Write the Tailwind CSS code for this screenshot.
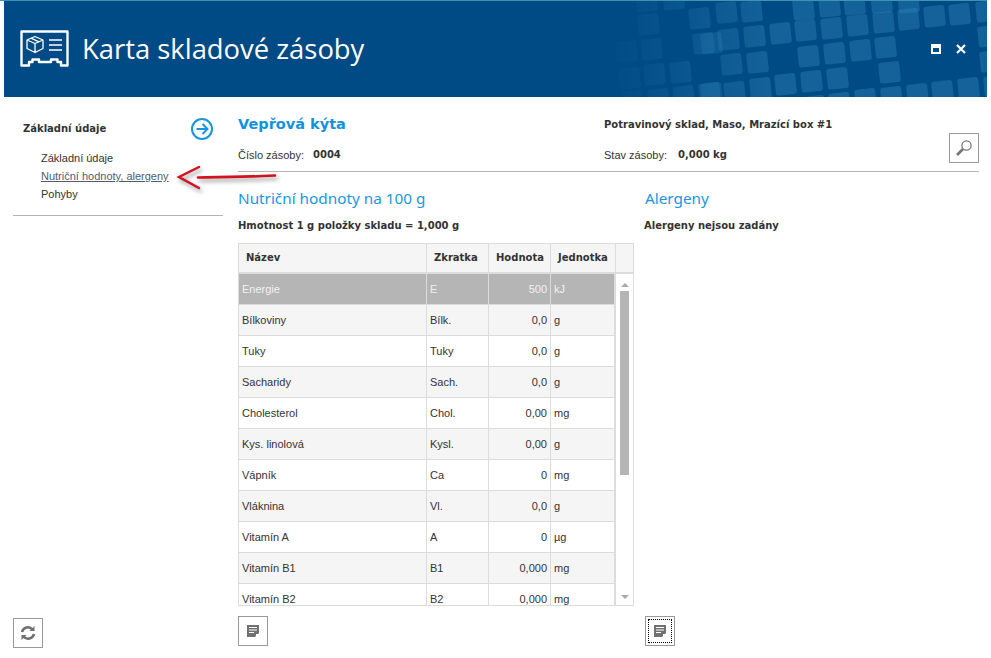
<!DOCTYPE html>
<html lang="cs">
<head>
  <meta charset="UTF-8">
  <title>Karta skladové zásoby</title>
  <script src="https://cdn.jsdelivr.net/npm/@tailwindcss/browser@4"></script>
</head>
<body class="bg-white">
<div class="relative w-[991px] h-[658px] overflow-hidden bg-white text-[#333] text-[11px] font-['Liberation_Sans',sans-serif]">

  <div class="w-[987px] h-px bg-[#3a96ae]"></div>

  <!-- Hlavicka -->
  <header class="relative ml-[4px] w-[983px] h-[96px] bg-[#004a85] flex items-center overflow-hidden">
    <svg class="absolute inset-0" width="983" height="96" viewBox="4 1 983 96">
      <defs>
        <linearGradient id="fade" gradientUnits="userSpaceOnUse" x1="600" y1="0" x2="770" y2="0">
          <stop offset="0" stop-color="#2d7fb5" stop-opacity="0"/>
          <stop offset="1" stop-color="#2d7fb5" stop-opacity="0.45"/>
        </linearGradient>
      </defs>
      <g fill="url(#fade)">
        <rect x="715" y="3" width="21" height="21" rx="3" transform="rotate(-6 715 3)"/>
        <rect x="740" y="2" width="21" height="21" rx="3" transform="rotate(-6 740 2)"/>
        <rect x="792" y="0" width="21" height="21" rx="3" transform="rotate(-6 792 0)"/>
        <rect x="818" y="-3" width="21" height="21" rx="3" transform="rotate(-6 818 -3)"/>
        <rect x="843" y="-5" width="21" height="21" rx="3" transform="rotate(-6 843 -5)"/>
        <rect x="870" y="-7" width="21" height="21" rx="3" transform="rotate(-6 870 -7)"/>
        <rect x="897" y="-7" width="21" height="21" rx="3" transform="rotate(-6 897 -7)"/>
        <rect x="717" y="30" width="21" height="21" rx="3" transform="rotate(-6 717 30)"/>
        <rect x="743" y="27" width="21" height="21" rx="3" transform="rotate(-6 743 27)"/>
        <rect x="769" y="24" width="21" height="21" rx="3" transform="rotate(-6 769 24)"/>
        <rect x="794" y="21" width="21" height="21" rx="3" transform="rotate(-6 794 21)"/>
        <rect x="820" y="19" width="21" height="21" rx="3" transform="rotate(-6 820 19)"/>
        <rect x="846" y="16" width="21" height="21" rx="3" transform="rotate(-6 846 16)"/>
        <rect x="872" y="13" width="21" height="21" rx="3" transform="rotate(-6 872 13)"/>
        <rect x="897" y="10" width="21" height="21" rx="3" transform="rotate(-6 897 10)"/>
        <rect x="923" y="7" width="21" height="21" rx="3" transform="rotate(-6 923 7)"/>
        <rect x="948" y="5" width="21" height="21" rx="3" transform="rotate(-6 948 5)"/>
        <rect x="975" y="2" width="21" height="21" rx="3" transform="rotate(-6 975 2)"/>
        <rect x="700" y="34" width="21" height="21" rx="3" transform="rotate(-6 700 34)"/>
        <rect x="720" y="55" width="21" height="21" rx="3" transform="rotate(-6 720 55)"/>
        <rect x="746" y="53" width="21" height="21" rx="3" transform="rotate(-6 746 53)"/>
        <rect x="797" y="47" width="21" height="21" rx="3" transform="rotate(-6 797 47)"/>
        <rect x="823" y="44" width="21" height="21" rx="3" transform="rotate(-6 823 44)"/>
        <rect x="849" y="41" width="21" height="21" rx="3" transform="rotate(-6 849 41)"/>
        <rect x="874" y="38" width="21" height="21" rx="3" transform="rotate(-6 874 38)"/>
        <rect x="977" y="27" width="21" height="21" rx="3" transform="rotate(-6 977 27)"/>
        <rect x="979" y="52" width="21" height="21" rx="3" transform="rotate(-6 979 52)"/>
        <rect x="878" y="63" width="21" height="21" rx="3" transform="rotate(-6 878 63)"/>
        <rect x="723" y="83" width="21" height="21" rx="3" transform="rotate(-6 723 83)"/>
        <rect x="749" y="79" width="21" height="21" rx="3" transform="rotate(-6 749 79)"/>
        <rect x="774" y="75" width="21" height="21" rx="3" transform="rotate(-6 774 75)"/>
        <rect x="800" y="72" width="21" height="21" rx="3" transform="rotate(-6 800 72)"/>
        <rect x="826" y="69" width="21" height="21" rx="3" transform="rotate(-6 826 69)"/>
        <rect x="700" y="84" width="21" height="21" rx="3" transform="rotate(-6 700 84)"/>
        <rect x="803" y="97" width="21" height="21" rx="3" transform="rotate(-6 803 97)"/>
        <rect x="828" y="94" width="21" height="21" rx="3" transform="rotate(-6 828 94)"/>
        <rect x="854" y="90" width="21" height="21" rx="3" transform="rotate(-6 854 90)"/>
        <rect x="880" y="88" width="21" height="21" rx="3" transform="rotate(-6 880 88)"/>
        <rect x="906" y="85" width="21" height="21" rx="3" transform="rotate(-6 906 85)"/>
        <rect x="931" y="82" width="21" height="21" rx="3" transform="rotate(-6 931 82)"/>
        <rect x="957" y="79" width="21" height="21" rx="3" transform="rotate(-6 957 79)"/>
        <rect x="983" y="77" width="21" height="21" rx="3" transform="rotate(-6 983 77)"/>
        <rect x="637" y="15" width="21" height="21" rx="3" transform="rotate(-6 637 15)"/>
        <rect x="640" y="40" width="21" height="21" rx="3" transform="rotate(-6 640 40)"/>
        <rect x="643" y="65" width="21" height="21" rx="3" transform="rotate(-6 643 65)"/>
        <rect x="669" y="63" width="21" height="21" rx="3" transform="rotate(-6 669 63)"/>
        <rect x="647" y="90" width="21" height="21" rx="3" transform="rotate(-6 647 90)"/>
        <rect x="672" y="87" width="21" height="21" rx="3" transform="rotate(-6 672 87)"/>
        <rect x="698" y="84" width="21" height="21" rx="3" transform="rotate(-6 698 84)"/>
        <rect x="688" y="9" width="21" height="21" rx="3" transform="rotate(-6 688 9)"/>
        <rect x="692" y="34" width="21" height="21" rx="3" transform="rotate(-6 692 34)"/>
        <rect x="635" y="-8" width="21" height="21" rx="3" transform="rotate(-6 635 -8)"/>
        <rect x="662" y="-10" width="21" height="21" rx="3" transform="rotate(-6 662 -10)"/>
        <rect x="615" y="42" width="21" height="21" rx="3" transform="rotate(-6 615 42)"/>
        <rect x="618" y="69" width="21" height="21" rx="3" transform="rotate(-6 618 69)"/>
        <rect x="620" y="92" width="21" height="21" rx="3" transform="rotate(-6 620 92)"/>
      </g>
    </svg>

    <svg class="relative ml-[16px] shrink-0" width="50" height="38" viewBox="0 0 50 38" fill="none" stroke="#fff">
      <path d="M1.5 1.5H47.500V35.500H41V32H37.500V29.500H31V32H19V29.500H12.500V32H9V35.500H1.500Z" stroke-width="2.400" stroke-linejoin="round"/>
      <path d="M15 6.500L23 10V18.500L15 22.500L7 18.500V10ZM7 10L15 13.500L23 10M15 13.500V22.500M11 8.200L19 11.800" stroke-width="1.300" stroke-linejoin="round"/>
      <path d="M29 10H42M29 15H42M29 20H42" stroke-width="1.600"/>
    </svg>
    <h1 class="relative ml-[12px] text-[27.4px] leading-none text-white font-['Open_Sans',sans-serif]">Karta skladové zásoby</h1>

    <div class="relative ml-auto mr-[21px] flex items-center gap-[15px]">
      <svg width="10" height="10" viewBox="0 0 10 10"><path d="M0 0H10V10H0Z M2 4V8H8V4Z" fill="#fff" fill-rule="evenodd"/></svg>
      <svg width="10" height="10" viewBox="0 0 10 10"><path d="M1 1L9 9M9 1L1 9" stroke="#fff" stroke-width="2.200"/></svg>
    </div>
  </header>

  <div class="flex h-[561px]">
    <!-- Levy panel -->
    <aside class="ml-[13px] w-[210px] shrink-0 flex flex-col">
      <div class="pt-[20px] pl-[10px] pr-[10px] h-[50px] flex justify-between items-start">
        <h2 class="mt-[4px] font-['DejaVu_Sans',sans-serif] font-bold text-[10px] leading-[16px] text-[#333]">Základní údaje</h2>
        <svg width="24" height="24" viewBox="0 0 24 24" fill="none" stroke="#1695e0" stroke-width="2" class="mr-[-1px]"><circle cx="12" cy="12" r="10"/><path d="M6.500 12H17M12.500 7L17.500 12L12.500 17"/></svg>
      </div>
      <nav class="pl-[28px] flex flex-col text-[11px] leading-[18px] mt-[2px]">
        <a>Základní údaje</a>
        <a class="underline text-[#555a70]">Nutriční hodnoty, alergeny</a>
        <a>Pohyby</a>
      </nav>
      <div class="mt-[12px] border-t border-[#b5b5b5]"></div>
      <button class="mt-auto mb-[10px] w-[30px] h-[30px] border border-[#999] flex items-center justify-center">
        <svg width="18" height="18" viewBox="0 0 18 18" fill="none" stroke="#707070" stroke-width="2.600"><path d="M3 8A6 6 0 0 1 13.500 5.500M15 10A6 6 0 0 1 4.500 12.500"/><path d="M15.500 2V7H10.500ZM2.500 16V11H7.500Z" fill="#707070" stroke="none"/></svg>
      </button>
    </aside>

    <!-- Obsah -->
    <main class="ml-[15px] w-[741px] flex flex-col">
      <section class="h-[75px] border-b border-[#b5b5b5] relative flex">
        <div class="w-[366px]">
          <h2 class="mt-[16px] font-['DejaVu_Sans',sans-serif] font-bold text-[14.500px] leading-[22px] text-[#1192e0]">Vepřová kýta</h2>
          <p class="mt-[11px] flex leading-[18px]">
            <span class="w-[75px]">Číslo zásoby:</span>
            <b class="font-['DejaVu_Sans',sans-serif] text-[10px]">0004</b>
          </p>
        </div>
        <div>
          <p class="mt-[20px] font-['DejaVu_Sans',sans-serif] font-bold text-[10px] leading-[16px]">Potravinový sklad, Maso, Mrazící box #1</p>
          <p class="mt-[13px] flex leading-[18px]">
            <span class="w-[74px]">Stav zásoby:</span>
            <b class="font-['DejaVu_Sans',sans-serif] text-[10px]">0,000 kg</b>
          </p>
        </div>
        <button class="ml-auto mt-[36px] w-[30px] h-[30px] border border-[#999] flex items-center justify-center">
          <svg width="18" height="18" viewBox="0 0 18 18" fill="none"><circle cx="11.500" cy="6.500" r="4.600" stroke="#777" stroke-width="1.300"/><path d="M8 10L2 16" stroke="#777" stroke-width="2.600"/></svg>
        </button>
      </section>

      <div class="flex">
        <section class="w-[396px]">
          <h3 class="mt-[14px] text-[#1a96e6] text-[15.300px] leading-[24px] font-['Noto_Sans',sans-serif]">Nutriční hodnoty na 100 g</h3>
          <p class="mt-[8px] font-['DejaVu_Sans',sans-serif] font-bold text-[10px] leading-[16px]">Hmotnost 1 g položky skladu = 1,000 g</p>
          <div class="mt-[9px] w-[396px] h-[363px] border border-[#dcdcdc] overflow-hidden">
            <div class="flex h-[30px] bg-[#f5f5f5] border-b-2 border-[#dcdcdc] font-['DejaVu_Sans',sans-serif] font-bold text-[10px] leading-[28px]">
              <div class="w-[188px] pl-[7px] border-r border-[#dcdcdc]">Název</div>
              <div class="w-[62px] pl-[7px] border-r border-[#dcdcdc]">Zkratka</div>
              <div class="w-[62px] pl-[7px] border-r border-[#dcdcdc]">Hodnota</div>
              <div class="w-[65px] pl-[7px] border-r border-[#dcdcdc]">Jednotka</div>
            </div>
            <div class="flex">
              <div class="w-[377px] border-r-2 border-[#dcdcdc] shrink-0">
                <div class="flex h-[31px] items-center bg-[#b5b5b5] text-[#f2f2f2] border-b border-[#dcdcdc]">
                  <div class="w-[188px] pl-[3px] h-full leading-[30px] border-r border-[#dcdcdc]">Energie</div>
                  <div class="w-[62px] pl-[3px] h-full leading-[30px] border-r border-[#dcdcdc]">E</div>
                  <div class="w-[62px] pr-[3px] h-full leading-[30px] text-right border-r border-[#dcdcdc]">500</div>
                  <div class="pl-[3px] leading-[30px]">kJ</div>
                </div>
                <div class="flex h-[31px] bg-[#f5f5f5] border-b border-[#dcdcdc]">
                  <div class="w-[188px] pl-[3px] leading-[30px] border-r border-[#dcdcdc]">Bílkoviny</div>
                  <div class="w-[62px] pl-[3px] leading-[30px] border-r border-[#dcdcdc]">Bílk.</div>
                  <div class="w-[62px] pr-[3px] leading-[30px] text-right border-r border-[#dcdcdc]">0,0</div>
                  <div class="pl-[3px] leading-[30px]">g</div>
                </div>
                <div class="flex h-[31px] bg-white border-b border-[#dcdcdc]">
                  <div class="w-[188px] pl-[3px] leading-[30px] border-r border-[#dcdcdc]">Tuky</div>
                  <div class="w-[62px] pl-[3px] leading-[30px] border-r border-[#dcdcdc]">Tuky</div>
                  <div class="w-[62px] pr-[3px] leading-[30px] text-right border-r border-[#dcdcdc]">0,0</div>
                  <div class="pl-[3px] leading-[30px]">g</div>
                </div>
                <div class="flex h-[31px] bg-[#f5f5f5] border-b border-[#dcdcdc]">
                  <div class="w-[188px] pl-[3px] leading-[30px] border-r border-[#dcdcdc]">Sacharidy</div>
                  <div class="w-[62px] pl-[3px] leading-[30px] border-r border-[#dcdcdc]">Sach.</div>
                  <div class="w-[62px] pr-[3px] leading-[30px] text-right border-r border-[#dcdcdc]">0,0</div>
                  <div class="pl-[3px] leading-[30px]">g</div>
                </div>
                <div class="flex h-[31px] bg-white border-b border-[#dcdcdc]">
                  <div class="w-[188px] pl-[3px] leading-[30px] border-r border-[#dcdcdc]">Cholesterol</div>
                  <div class="w-[62px] pl-[3px] leading-[30px] border-r border-[#dcdcdc]">Chol.</div>
                  <div class="w-[62px] pr-[3px] leading-[30px] text-right border-r border-[#dcdcdc]">0,00</div>
                  <div class="pl-[3px] leading-[30px]">mg</div>
                </div>
                <div class="flex h-[31px] bg-[#f5f5f5] border-b border-[#dcdcdc]">
                  <div class="w-[188px] pl-[3px] leading-[30px] border-r border-[#dcdcdc]">Kys. linolová</div>
                  <div class="w-[62px] pl-[3px] leading-[30px] border-r border-[#dcdcdc]">Kysl.</div>
                  <div class="w-[62px] pr-[3px] leading-[30px] text-right border-r border-[#dcdcdc]">0,00</div>
                  <div class="pl-[3px] leading-[30px]">g</div>
                </div>
                <div class="flex h-[31px] bg-white border-b border-[#dcdcdc]">
                  <div class="w-[188px] pl-[3px] leading-[30px] border-r border-[#dcdcdc]">Vápník</div>
                  <div class="w-[62px] pl-[3px] leading-[30px] border-r border-[#dcdcdc]">Ca</div>
                  <div class="w-[62px] pr-[3px] leading-[30px] text-right border-r border-[#dcdcdc]">0</div>
                  <div class="pl-[3px] leading-[30px]">mg</div>
                </div>
                <div class="flex h-[31px] bg-[#f5f5f5] border-b border-[#dcdcdc]">
                  <div class="w-[188px] pl-[3px] leading-[30px] border-r border-[#dcdcdc]">Vláknina</div>
                  <div class="w-[62px] pl-[3px] leading-[30px] border-r border-[#dcdcdc]">Vl.</div>
                  <div class="w-[62px] pr-[3px] leading-[30px] text-right border-r border-[#dcdcdc]">0,0</div>
                  <div class="pl-[3px] leading-[30px]">g</div>
                </div>
                <div class="flex h-[31px] bg-white border-b border-[#dcdcdc]">
                  <div class="w-[188px] pl-[3px] leading-[30px] border-r border-[#dcdcdc]">Vitamín A</div>
                  <div class="w-[62px] pl-[3px] leading-[30px] border-r border-[#dcdcdc]">A</div>
                  <div class="w-[62px] pr-[3px] leading-[30px] text-right border-r border-[#dcdcdc]">0</div>
                  <div class="pl-[3px] leading-[30px]">µg</div>
                </div>
                <div class="flex h-[31px] bg-[#f5f5f5] border-b border-[#dcdcdc]">
                  <div class="w-[188px] pl-[3px] leading-[30px] border-r border-[#dcdcdc]">Vitamín B1</div>
                  <div class="w-[62px] pl-[3px] leading-[30px] border-r border-[#dcdcdc]">B1</div>
                  <div class="w-[62px] pr-[3px] leading-[30px] text-right border-r border-[#dcdcdc]">0,000</div>
                  <div class="pl-[3px] leading-[30px]">mg</div>
                </div>
                <div class="flex h-[22px] bg-white overflow-hidden">
                  <div class="w-[188px] pl-[3px] leading-[30px] border-r border-[#dcdcdc]">Vitamín B2</div>
                  <div class="w-[62px] pl-[3px] leading-[30px] border-r border-[#dcdcdc]">B2</div>
                  <div class="w-[62px] pr-[3px] leading-[30px] text-right border-r border-[#dcdcdc]">0,000</div>
                  <div class="pl-[3px] leading-[30px]">mg</div>
                </div>
              </div>
              <!-- Posuvnik -->
              <div class="w-[17px] h-[332px] flex flex-col items-center">
                <div class="mt-[9px] w-0 h-0 border-x-[4px] border-x-transparent border-b-[4px] border-b-[#aaa]"></div>
                <div class="mt-[4px] w-[9px] h-[184px] bg-[#b5b5b5]"></div>
                <div class="mt-auto mb-[7px] w-0 h-0 border-x-[4px] border-x-transparent border-t-[4px] border-t-[#aaa]"></div>
              </div>
            </div>
          </div>
          <button class="mt-[10px] w-[30px] h-[30px] border border-[#999] flex items-center justify-center">
            <svg width="14" height="14" viewBox="0 0 14 14"><path d="M1 1H13V9L9 13H1Z" fill="#707070"/><path d="M3 3.500H11M3 6H11M3 8.500H8" stroke="#fff" stroke-width="1"/><path d="M10 13V10H13Z" fill="#fff"/></svg>
          </button>
        </section>

        <section class="ml-[10px] w-[335px] flex flex-col">
          <h3 class="mt-[14px] ml-[1px] text-[#1a96e6] text-[15.300px] leading-[24px] font-['Noto_Sans',sans-serif]">Alergeny</h3>
          <p class="mt-[8px] font-['DejaVu_Sans',sans-serif] font-bold text-[10px] leading-[16px]">Alergeny nejsou zadány</p>
          <button class="mt-[382px] ml-[1px] w-[30px] h-[30px] border border-[#999] p-[2px]">
            <span class="w-full h-full border border-dotted border-black flex items-center justify-center">
              <svg width="14" height="14" viewBox="0 0 14 14"><path d="M1 1H13V9L9 13H1Z" fill="#707070"/><path d="M3 3.500H11M3 6H11M3 8.500H8" stroke="#fff" stroke-width="1"/><path d="M10 13V10H13Z" fill="#fff"/></svg>
            </span>
          </button>
        </section>
      </div>
    </main>
  </div>

  <!-- Sipka pres obsah -->
  <svg class="absolute left-[170px] top-[160px] [filter:drop-shadow(2px_3px_2px_rgba(0,0,0,.4))]" width="115" height="35" viewBox="170 160 115 35" fill="none" stroke="#d2121e" stroke-linecap="round">
    <path d="M199 167L179 177L199 188" stroke-width="2.500"/>
    <path d="M198 177.500C220 177 250 177 275 175.500" stroke-width="2.600"/>
  </svg>
</div>
</body>
</html>
